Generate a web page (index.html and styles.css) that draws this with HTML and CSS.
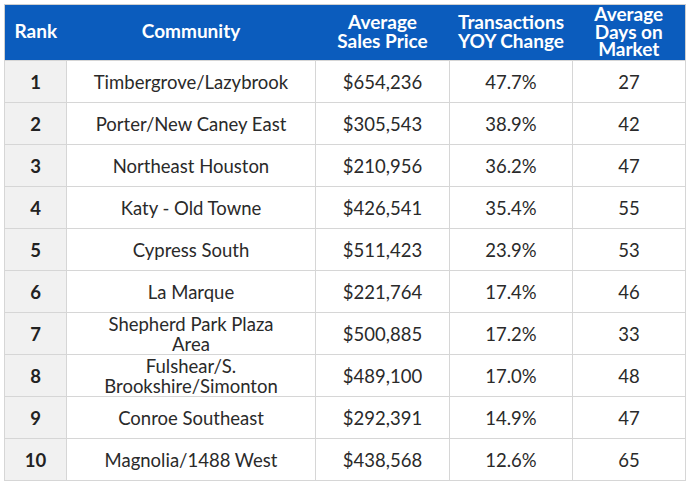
FILE: index.html
```html
<!DOCTYPE html>
<html>
<head>
<meta charset="utf-8">
<link rel="stylesheet" href="styles.css">
</head>
<body>
<table class="tbl">
  <colgroup>
    <col class="c-rank"><col class="c-comm"><col class="c-price"><col class="c-tx"><col class="c-days">
  </colgroup>
  <thead>
    <tr>
      <th>Rank</th>
      <th>Community</th>
      <th>Average<br>Sales Price</th>
      <th>Transactions<br>YOY Change</th>
      <th class="tight">Average<br>Days on<br>Market</th>
    </tr>
  </thead>
  <tbody>
    <tr><td class="rank">1</td><td>Timbergrove/Lazybrook</td><td>$654,236</td><td>47.7%</td><td>27</td></tr>
    <tr><td class="rank">2</td><td>Porter/New Caney East</td><td>$305,543</td><td>38.9%</td><td>42</td></tr>
    <tr><td class="rank">3</td><td>Northeast Houston</td><td>$210,956</td><td>36.2%</td><td>47</td></tr>
    <tr><td class="rank">4</td><td>Katy - Old Towne</td><td>$426,541</td><td>35.4%</td><td>55</td></tr>
    <tr><td class="rank">5</td><td>Cypress South</td><td>$511,423</td><td>23.9%</td><td>53</td></tr>
    <tr><td class="rank">6</td><td>La Marque</td><td>$221,764</td><td>17.4%</td><td>46</td></tr>
    <tr><td class="rank">7</td><td class="two">Shepherd Park Plaza<br>Area</td><td>$500,885</td><td>17.2%</td><td>33</td></tr>
    <tr><td class="rank">8</td><td class="two">Fulshear/S.<br>Brookshire/Simonton</td><td>$489,100</td><td>17.0%</td><td>48</td></tr>
    <tr><td class="rank">9</td><td>Conroe Southeast</td><td>$292,391</td><td>14.9%</td><td>47</td></tr>
    <tr><td class="rank">10</td><td>Magnolia/1488 West</td><td>$438,568</td><td>12.6%</td><td>65</td></tr>
  </tbody>
</table>
</body>
</html>
```

FILE: styles.css
```css
html, body {
  margin: 0;
  padding: 0;
  background: #ffffff;
}
body {
  padding: 4px 0 0 4px;
  font-family: Lato, "Liberation Sans", sans-serif;
}
.tbl {
  border-collapse: collapse;
  width: 681px;
  table-layout: fixed;
  border: 1px solid #cfcfcf;
}
.c-rank { width: 62px; }
.c-comm { width: 249px; }
.c-price { width: 134px; }
.c-tx { width: 123px; }
.c-days { width: 113px; }
.tbl th {
  background: #0b5cbd;
  color: #ffffff;
  font-weight: bold;
  font-size: 19px;
  line-height: 19px;
  height: 51px;
  padding: 0 0 4px 0;
  text-align: center;
  vertical-align: middle;
  border: none;
}
.tbl th.tight {
  line-height: 17.5px;
  height: 53px;
  padding: 0 0 2px 0;
}
.tbl td {
  height: 41px;
  padding: 0;
  text-align: center;
  vertical-align: middle;
  font-size: 18.5px;
  line-height: 20px;
  color: #2a2a2a;
  border: 1px solid #d6d6d6;
}
.tbl td.rank {
  background: #f1f1f1;
  font-weight: bold;
  color: #222222;
}
.tbl td.two {
  line-height: 20px;
}
```
